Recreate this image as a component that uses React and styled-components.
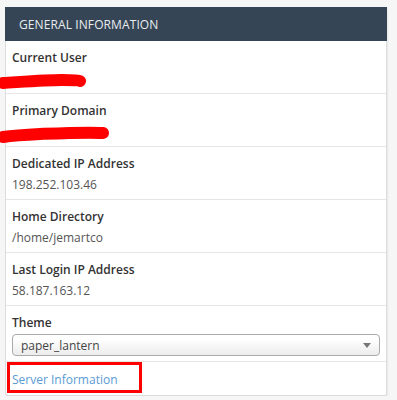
import React from "react";
import styled, { createGlobalStyle } from "styled-components";

const Global = createGlobalStyle`
	html, body {
		margin: 0;
		padding: 0;
		background: #f6f6f6;
		font-family: "Open Sans", "Liberation Sans", sans-serif;
	}
	#root {
		padding: 7px 0 0 5px;
	}
`;

const Panel = styled.div`
	width: 380px;
	background: #fff;
	border: 1px solid #dcdcdc;
	border-top: none;
	border-radius: 2px;
	box-shadow: 1px 1px 2px rgba(0, 0, 0, 0.06);
`;

const Heading = styled.div`
	height: 34px;
	margin: 0 -1px;
	display: flex;
	align-items: center;
	padding-left: 14px;
	background: #354556;
	color: #e8ecef;
	font-size: 12px;
	text-transform: uppercase;
	letter-spacing: 0.1px;
`;

const Row = styled.div`
	position: relative;
	padding: ${(p) => (p.$compact ? "5px 6px 5px" : "7px 6px 4px")};
	border-bottom: ${(p) => (p.$last ? "none" : "1px solid #e6e6e6")};
`;

const Label = styled.div`
	font-size: 12px;
	font-weight: 600;
	color: #333;
	line-height: 20px;
`;

const Value = styled.div`
	margin-top: 1px;
	font-size: 12px;
	color: #555;
	line-height: 20px;
	min-height: 20px;
`;

const Scribble = styled.svg`
	position: absolute;
	left: -6px;
	top: ${(p) => p.$top}px;
`;

const Select = styled.div`
	margin: 1px 0;
	height: 20px;
	display: flex;
	align-items: center;
	justify-content: space-between;
	padding: 0 8px 0 8px;
	border: 1px solid #aaa;
	border-radius: 4px;
	background: linear-gradient(#fff 20%, #ececec);
	font-size: 12px;
	color: #444;
	&::after {
		content: "";
		border-left: 4px solid transparent;
		border-right: 4px solid transparent;
		border-top: 5px solid #777;
	}
`;

const Link = styled.a`
	font-size: 12px;
	line-height: 20px;
	color: #5a9bd5;
	text-decoration: none;
`;

const Highlight = styled.div`
	position: absolute;
	left: 1px;
	top: 0;
	width: 129px;
	height: 25px;
	border: 3px solid #ff0000;
`;

function RedMark({ top, width, d }) {
	return (
		<Scribble $top={top} width={width + 12} height="24" viewBox={`0 0 ${width + 12} 24`}>
			<path d={d} stroke="#ff0000" strokeWidth="12" strokeLinecap="round" fill="none" />
		</Scribble>
	);
}

const items = [
	{ label: "Dedicated IP Address", value: "198.252.103.46" },
	{ label: "Home Directory", value: "/home/jemartco" },
	{ label: "Last Login IP Address", value: "58.187.163.12" },
];

export default function App() {
	return (
		<>
			<Global />
			<Panel>
				<Heading>General Information</Heading>
				<Row>
					<Label>Current User</Label>
					<Value />
					<RedMark top={28} width={80} d="M3 14 C20 13 45 11 62 11 C72 11 78 11 80 12" />
				</Row>
				<Row>
					<Label>Primary Domain</Label>
					<Value />
					<RedMark top={28} width={103} d="M3 15 C10 14 20 13 40 12 C65 11 88 10 103 11" />
				</Row>
				{items.map((it) => (
					<Row key={it.label}>
						<Label>{it.label}</Label>
						<Value>{it.value}</Value>
					</Row>
				))}
				<Row>
					<Label>Theme</Label>
					<Select>paper_lantern</Select>
				</Row>
				<Row $compact $last>
					<Link href="#">Server Information</Link>
					<Highlight />
				</Row>
			</Panel>
		</>
	);
}
